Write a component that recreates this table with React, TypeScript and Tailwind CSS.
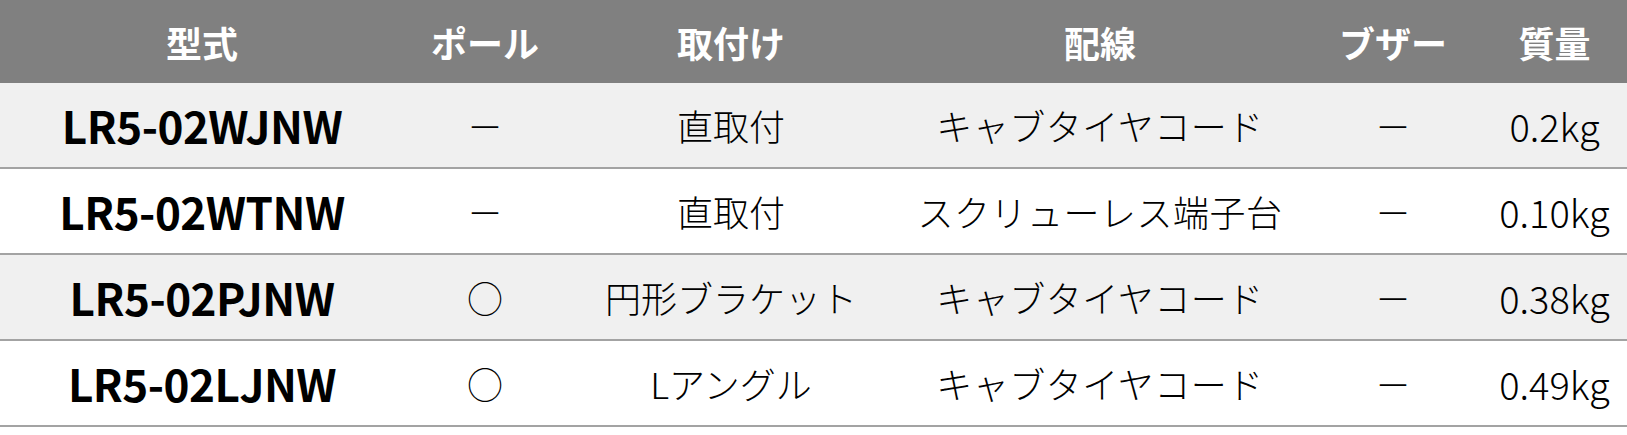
const rows = [
    { model: 'LR5-02WJNW', pole: '－', mount: '直取付', wiring: 'キャブタイヤコード', buzzer: '－', weight: '0.2kg' },
    { model: 'LR5-02WTNW', pole: '－', mount: '直取付', wiring: 'スクリューレス端子台', buzzer: '－', weight: '0.10kg' },
    { model: 'LR5-02PJNW', pole: '○', mount: '円形ブラケット', wiring: 'キャブタイヤコード', buzzer: '－', weight: '0.38kg' },
    { model: 'LR5-02LJNW', pole: '○', mount: 'Lアングル', wiring: 'キャブタイヤコード', buzzer: '－', weight: '0.49kg' },
];

const cols = 'grid grid-cols-[404px_162px_330px_408px_178px_145px]';

export default function App() {
    return (
        <div className="w-[1627px] h-[435px] bg-white font-['Noto_Sans_CJK_JP',sans-serif]">
            <div className={`${cols} h-[83px] bg-[#808080] text-white font-bold text-[36px] items-center text-center`}>
                <div>型式</div>
                <div>ポール</div>
                <div>取付け</div>
                <div>配線</div>
                <div>ブザー</div>
                <div>質量</div>
            </div>
            {rows.map((r, i) => (
                <div
                    key={r.model}
                    className={`${cols} h-[86px] border-b-2 border-[#a3a3a3] items-center text-center text-black font-light text-[36px] ${i % 2 === 0 ? 'bg-[#f0f0f0]' : 'bg-white'}`}
                >
                    <div className="font-bold text-[44px] tracking-[-0.5px]">{r.model}</div>
                    <div>{r.pole}</div>
                    <div>{r.mount}</div>
                    <div className="tracking-[0.5px]">{r.wiring}</div>
                    <div>{r.buzzer}</div>
                    <div className="text-[38px]">{r.weight}</div>
                </div>
            ))}
        </div>
    );
}
